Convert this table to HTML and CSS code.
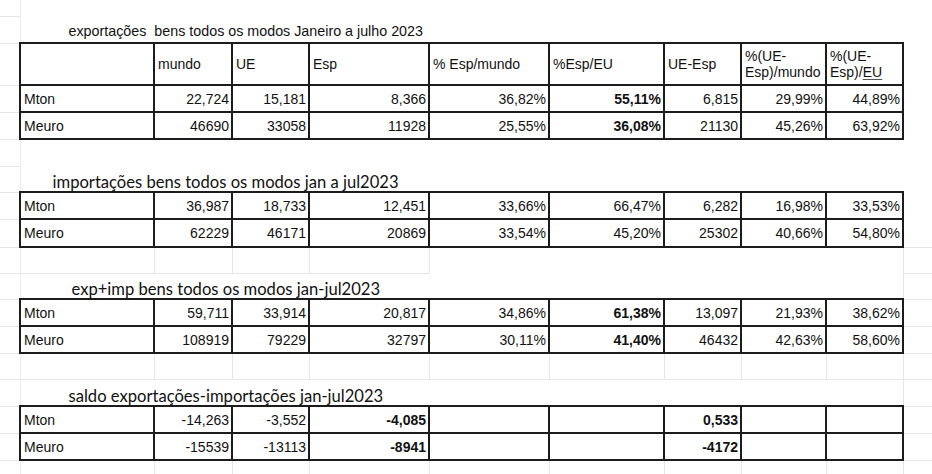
FILE: index.html
```html
<!DOCTYPE html>
<html lang="pt">
<head>
<meta charset="utf-8">
<title>exportações e importações jan-jul 2023</title>
<link rel="stylesheet" href="styles.css">
</head>
<body>
<table class="sheet">
  <colgroup>
    <col class="c-gut"><col class="c-lab"><col class="c-mundo"><col class="c-ue"><col class="c-esp">
    <col class="c-pm"><col class="c-pe"><col class="c-ueesp"><col class="c-um"><col class="c-ue2"><col class="c-tail">
  </colgroup>
  <tbody>
    <tr class="r-top"><td class="gut"></td><td colspan="9"></td><td></td></tr>
    <tr class="r-t1"><td class="gut"></td><td colspan="9" class="title title-1">exportações&nbsp; bens todos os modos Janeiro a julho 2023</td><td></td></tr>
    <tr class="r-head">
      <td class="gut"></td>
      <td class="d"></td>
      <td class="d hd">mundo</td>
      <td class="d hd">UE</td>
      <td class="d hd">Esp</td>
      <td class="d hd">% Esp/mundo</td>
      <td class="d hd">%Esp/EU</td>
      <td class="d hd">UE-Esp</td>
      <td class="d hd">%(UE-<br>Esp)/mundo</td>
      <td class="d hd">%(UE-<br>Esp)/<span class="squig">EU</span></td>
      <td></td>
    </tr>
    <tr class="r-d"><td class="gut"></td><td class="d lab">Mton</td><td class="d n">22,724</td><td class="d n">15,181</td><td class="d n">8,366</td><td class="d n">36,82%</td><td class="d n b">55,11%</td><td class="d n">6,815</td><td class="d n">29,99%</td><td class="d n">44,89%</td><td></td></tr>
    <tr class="r-d"><td class="gut"></td><td class="d lab">Meuro</td><td class="d n">46690</td><td class="d n">33058</td><td class="d n">11928</td><td class="d n">25,55%</td><td class="d n b">36,08%</td><td class="d n">21130</td><td class="d n">45,26%</td><td class="d n">63,92%</td><td></td></tr>
    <tr class="r-blank"><td class="gut"></td><td colspan="9"></td><td></td></tr>
    <tr class="r-t2"><td class="gut"></td><td colspan="9" class="title title-cal title-2">importações bens todos os modos jan a jul2023</td><td></td></tr>
    <tr class="r-d"><td class="gut"></td><td class="d lab">Mton</td><td class="d n">36,987</td><td class="d n">18,733</td><td class="d n">12,451</td><td class="d n">33,66%</td><td class="d n">66,47%</td><td class="d n">6,282</td><td class="d n">16,98%</td><td class="d n">33,53%</td><td></td></tr>
    <tr class="r-d2"><td class="gut"></td><td class="d lab">Meuro</td><td class="d n">62229</td><td class="d n">46171</td><td class="d n">20869</td><td class="d n">33,54%</td><td class="d n">45,20%</td><td class="d n">25302</td><td class="d n">40,66%</td><td class="d n">54,80%</td><td></td></tr>
    <tr class="r-blank2"><td class="gut"></td><td class="g"></td><td class="g"></td><td class="g"></td><td class="g"></td><td></td><td></td><td></td><td></td><td></td><td class="g"></td></tr>
    <tr class="r-t3"><td class="gut"></td><td colspan="9" class="title title-cal title-3">exp+imp bens todos os modos jan-jul2023</td><td class="g"></td></tr>
    <tr class="r-d"><td class="gut"></td><td class="d lab">Mton</td><td class="d n">59,711</td><td class="d n">33,914</td><td class="d n">20,817</td><td class="d n">34,86%</td><td class="d n b">61,38%</td><td class="d n">13,097</td><td class="d n">21,93%</td><td class="d n">38,62%</td><td class="g"></td></tr>
    <tr class="r-d"><td class="gut"></td><td class="d lab">Meuro</td><td class="d n">108919</td><td class="d n">79229</td><td class="d n">32797</td><td class="d n">30,11%</td><td class="d n b">41,40%</td><td class="d n">46432</td><td class="d n">42,63%</td><td class="d n">58,60%</td><td class="g"></td></tr>
    <tr class="r-blank2"><td class="gut"></td><td class="g"></td><td class="g"></td><td class="g"></td><td class="g"></td><td class="g"></td><td class="g"></td><td class="g"></td><td class="g"></td><td class="g"></td><td class="g"></td></tr>
    <tr class="r-t4"><td class="gut"></td><td colspan="9" class="title title-cal title-4">saldo exportações-importações jan-jul2023</td><td class="g"></td></tr>
    <tr class="r-d"><td class="gut"></td><td class="d lab">Mton</td><td class="d n">-14,263</td><td class="d n">-3,552</td><td class="d n b">-4,085</td><td class="d"></td><td class="d"></td><td class="d n b">0,533</td><td class="d"></td><td class="d"></td><td class="g"></td></tr>
    <tr class="r-d"><td class="gut"></td><td class="d lab">Meuro</td><td class="d n">-15539</td><td class="d n">-13113</td><td class="d n b">-8941</td><td class="d"></td><td class="d"></td><td class="d n b">-4172</td><td class="d"></td><td class="d"></td><td class="g"></td></tr>
    <tr class="r-end"><td class="gut"></td><td class="g"></td><td class="g"></td><td class="g"></td><td class="g"></td><td class="g"></td><td class="g"></td><td class="g"></td><td class="g"></td><td class="g"></td><td></td></tr>
  </tbody>
</table>
</body>
</html>
```

FILE: styles.css
```css
html, body {
  margin: 0;
  background: #ffffff;
}

body {
  font-family: "Liberation Sans", Arial, sans-serif;
  font-size: 14px;
  color: #111111;
  overflow: hidden;
}

.sheet {
  border-collapse: collapse;
  table-layout: fixed;
  width: 932px;
}

.c-gut { width: 20px; }
.c-lab { width: 134px; }
.c-mundo { width: 78px; }
.c-ue { width: 77px; }
.c-esp { width: 120px; }
.c-pm { width: 120px; }
.c-pe { width: 115px; }
.c-ueesp { width: 77px; }
.c-um { width: 85px; }
.c-ue2 { width: 77px; }
.c-tail { width: 29px; }

td {
  padding: 0 2px 0 3px;
  white-space: nowrap;
  overflow: visible;
  vertical-align: middle;
  line-height: 16px;
}

.gut {
  border-bottom: 1px solid #e6e6e6;
  border-right: 1px solid #ececec;
}

.g {
  border: 1px solid #e6e6e6;
}

.d {
  border: 2px solid #1c1c1c;
}

.hd {
  text-align: left;
  white-space: normal;
  line-height: 16px;
}

.lab {
  text-align: left;
}

.n {
  text-align: right;
  padding-right: 2px;
}

.b {
  font-weight: bold;
}

.squig {
  text-decoration: underline;
  text-decoration-color: #555;
  text-underline-offset: 2px;
}

.title {
  vertical-align: bottom;
  padding-bottom: 3px;
  font-size: 14.3px;
  color: #111111;
}

.title-cal {
  font-family: Lato, "Open Sans", sans-serif;
  font-size: 16.6px;
  padding-bottom: 1px;
}

.title-1 { padding-left: 48px; }
.title-2 { padding-left: 32px; }
.title-3 { padding-left: 51px; }
.title-4 { padding-left: 48px; }

.r-top { height: 16px; }
.r-t1 { height: 27px; }
.r-head { height: 42px; }
.r-d { height: 27px; }
.r-d2 { height: 28px; }
.r-blank { height: 27px; }
.r-blank2 { height: 26px; }
.r-t2 { height: 26px; }
.r-t3 { height: 26px; }
.r-t4 { height: 27px; }
.r-end { height: 20px; }
```
